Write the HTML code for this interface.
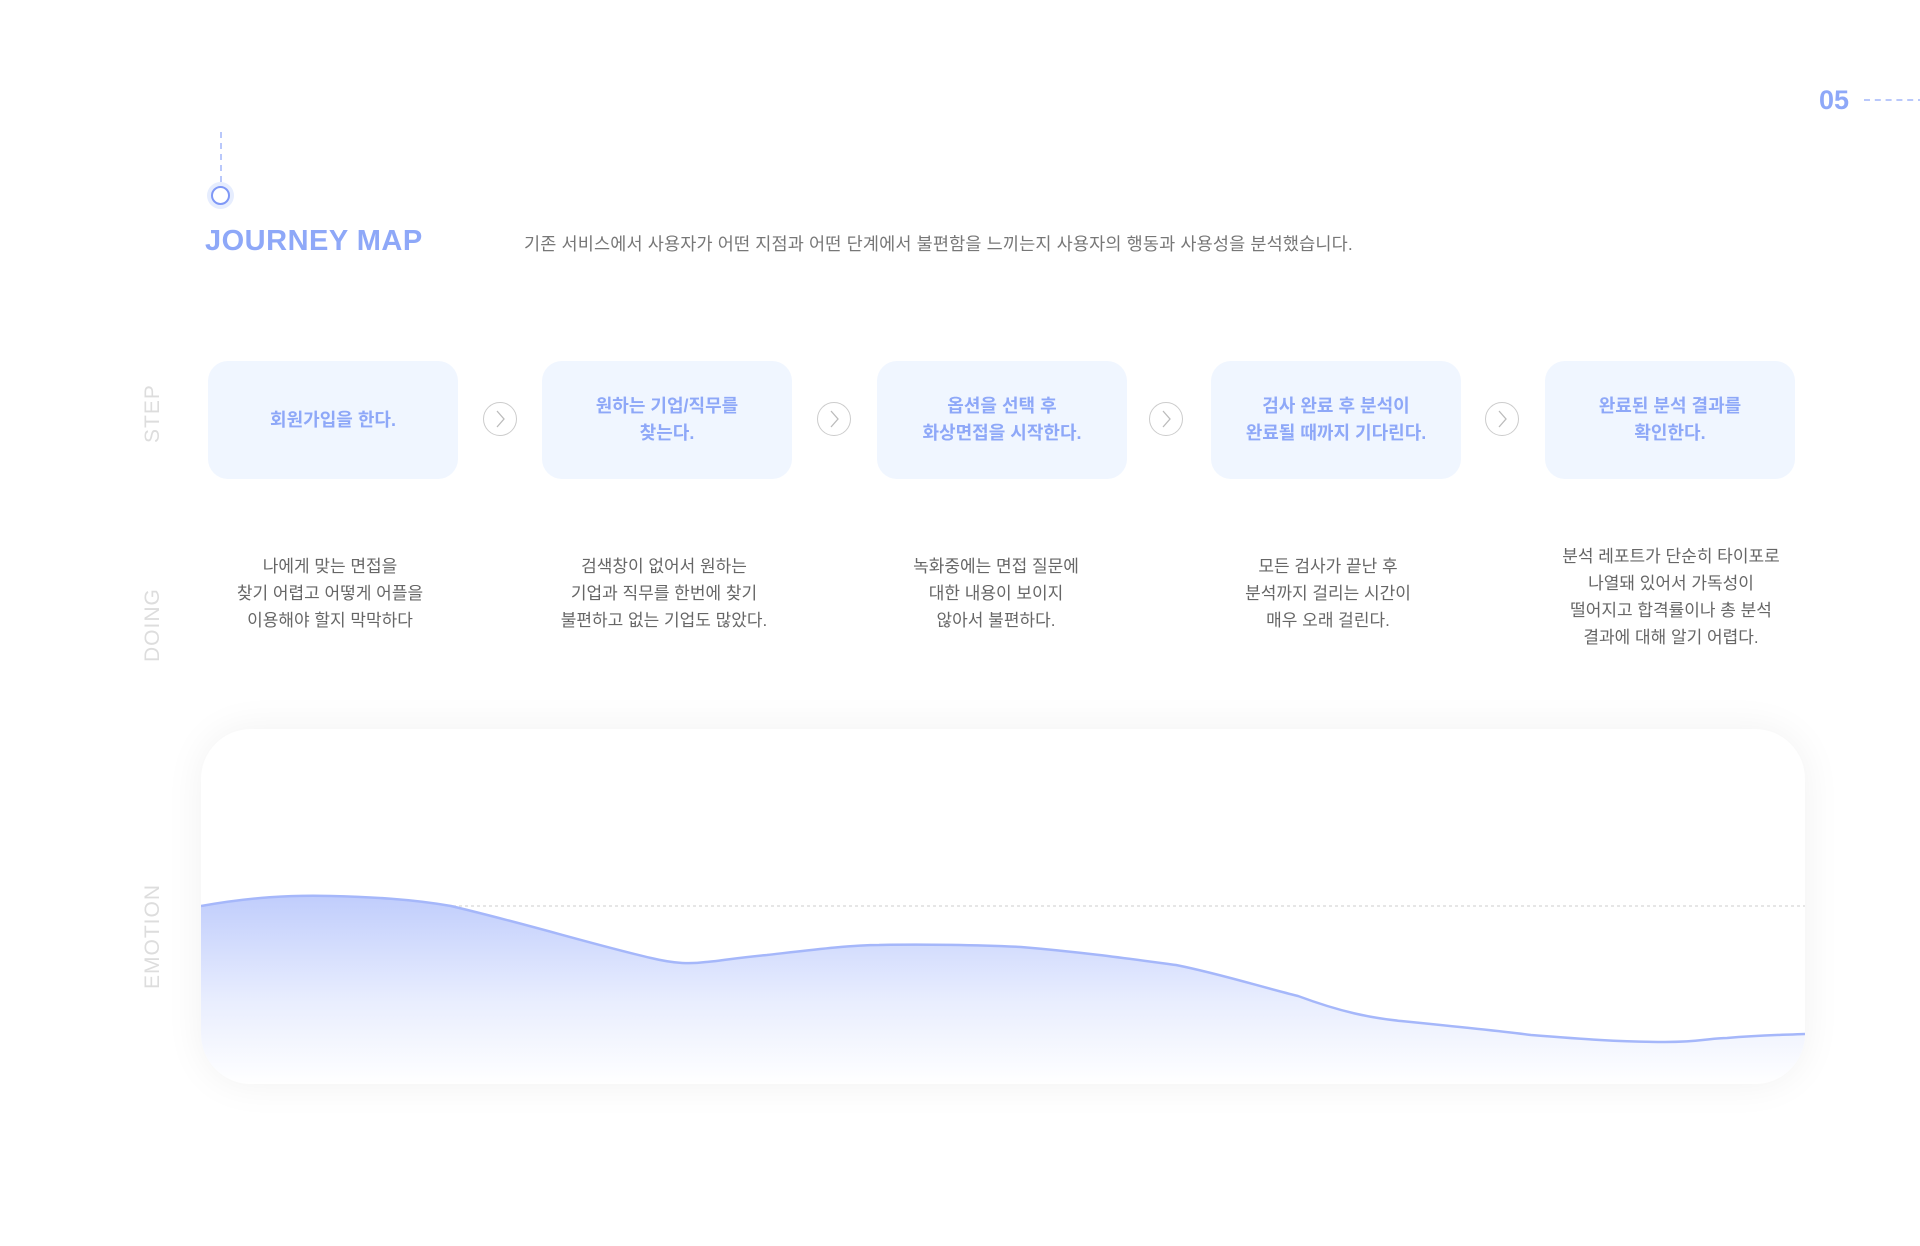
<!DOCTYPE html>
<html><head><meta charset="utf-8"><style>
*{margin:0;padding:0;box-sizing:border-box}
body{width:1920px;height:1246px;background:#fff;position:relative;overflow:hidden;font-family:"Liberation Sans","Noto Sans CJK KR",sans-serif}
.abs{position:absolute}
.num{left:1819px;top:85px;font-size:27px;font-weight:bold;color:#8ea8f8}
.hd{left:1864px;top:99px;width:60px;border-top:2px dashed #b9c8fb}
.vd{left:220px;top:132px;height:50px;border-left:2px dashed #b9c8fb}
.dot{left:207px;top:182px;width:27px;height:27px;border-radius:50%;background:#e6edfe}
.dot i{position:absolute;left:4px;top:4px;width:19px;height:19px;border-radius:50%;border:2px solid #7f98f6;background:#fff}
.title{left:205px;top:225px;font-size:29px;font-weight:bold;color:#8ea8f8;letter-spacing:0.5px}
.desc{left:524px;top:231px;font-size:17.5px;color:#777;letter-spacing:0.15px}
.lab{color:#ddd;font-size:21px;letter-spacing:1px;transform:rotate(-90deg);transform-origin:left top;white-space:nowrap}
.box{top:361px;width:250px;height:118px;border-radius:20px;background:#f0f6ff;color:#8ea8f8;font-weight:bold;font-size:18px;line-height:27px;display:flex;align-items:center;justify-content:center;text-align:center}
.arr{top:402px;width:34px;height:34px;border-radius:50%;border:1.5px solid #ccc}
.arr svg{position:absolute;left:8px;top:6px}
.doing{width:300px;text-align:center;font-size:17px;line-height:27px;color:#666}
.card{left:201px;top:729px;width:1604px;height:355px;border-radius:50px;background:#fff;box-shadow:0 0 40px rgba(0,0,0,0.06);overflow:hidden}
</style></head><body>
<div class="abs num">05</div><div class="abs hd"></div>
<div class="abs vd"></div>
<div class="abs dot"><i></i></div>
<div class="abs title">JOURNEY MAP</div>
<div class="abs desc">기존 서비스에서 사용자가 어떤 지점과 어떤 단계에서 불편함을 느끼는지 사용자의 행동과 사용성을 분석했습니다.</div>

<div class="abs lab" style="left:141px;top:443px">STEP</div>
<div class="abs lab" style="left:141px;top:662px">DOING</div>
<div class="abs lab" style="left:141px;top:989px">EMOTION</div>

<div class="abs box" style="left:208px">회원가입을 한다.</div>
<div class="abs box" style="left:542px">원하는 기업/직무를<br>찾는다.</div>
<div class="abs box" style="left:877px">옵션을 선택 후<br>화상면접을 시작한다.</div>
<div class="abs box" style="left:1211px">검사 완료 후 분석이<br>완료될 때까지 기다린다.</div>
<div class="abs box" style="left:1545px">완료된 분석 결과를<br>확인한다.</div>

<div class="abs arr" style="left:483px"><svg width="16" height="20"><path d="M5 2 L12 10 L5 18" fill="none" stroke="#bbb" stroke-width="1.3"/></svg></div>
<div class="abs arr" style="left:817px"><svg width="16" height="20"><path d="M5 2 L12 10 L5 18" fill="none" stroke="#bbb" stroke-width="1.3"/></svg></div>
<div class="abs arr" style="left:1149px"><svg width="16" height="20"><path d="M5 2 L12 10 L5 18" fill="none" stroke="#bbb" stroke-width="1.3"/></svg></div>
<div class="abs arr" style="left:1485px"><svg width="16" height="20"><path d="M5 2 L12 10 L5 18" fill="none" stroke="#bbb" stroke-width="1.3"/></svg></div>

<div class="abs doing" style="left:180px;top:553px">나에게 맞는 면접을<br>찾기 어렵고 어떻게 어플을<br>이용해야 할지 막막하다</div>
<div class="abs doing" style="left:514px;top:553px">검색창이 없어서 원하는<br>기업과 직무를 한번에 찾기<br>불편하고 없는 기업도 많았다.</div>
<div class="abs doing" style="left:846px;top:553px">녹화중에는 면접 질문에<br>대한 내용이 보이지<br>않아서 불편하다.</div>
<div class="abs doing" style="left:1178px;top:553px">모든 검사가 끝난 후<br>분석까지 걸리는 시간이<br>매우 오래 걸린다.</div>
<div class="abs doing" style="left:1521px;top:543px">분석 레포트가 단순히 타이포로<br>나열돼 있어서 가독성이<br>떨어지고 합격률이나 총 분석<br>결과에 대해 알기 어렵다.</div>

<div class="abs card">
<svg width="1604" height="355" style="position:absolute;left:0;top:0">
<defs><linearGradient id="g" x1="0" y1="0" x2="0" y2="1"><stop offset="0" stop-color="#c0cdfc"/><stop offset="0.55" stop-color="#e8edfe"/><stop offset="1" stop-color="#ffffff"/></linearGradient></defs>
<line x1="0" y1="177" x2="1604" y2="177" stroke="#ddd" stroke-width="1.5" stroke-dasharray="3 3"/>
<path d="M0 177 C50 168 90 166 130 167 C170 168 210 170 250 177 C330 196 390 215 450 229 C475 235 490 235 505 233 C520 232 540 228 566 226 C610 221 650 216 678 216 C720 215 780 216 820 218 C880 223 930 230 975 236 C1020 245 1060 258 1097 267 C1140 283 1170 289 1200 292 C1260 298 1300 302 1330 306 C1380 310 1420 313 1464 313 C1500 313 1510 309 1526 309 C1560 306 1580 306 1604 305 L1604 355 L0 355 Z" fill="url(#g)"/>
<path d="M0 177 C50 168 90 166 130 167 C170 168 210 170 250 177 C330 196 390 215 450 229 C475 235 490 235 505 233 C520 232 540 228 566 226 C610 221 650 216 678 216 C720 215 780 216 820 218 C880 223 930 230 975 236 C1020 245 1060 258 1097 267 C1140 283 1170 289 1200 292 C1260 298 1300 302 1330 306 C1380 310 1420 313 1464 313 C1500 313 1510 309 1526 309 C1560 306 1580 306 1604 305" fill="none" stroke="#a5b7fa" stroke-width="2.5"/>
</svg>
</div>
</body></html>
